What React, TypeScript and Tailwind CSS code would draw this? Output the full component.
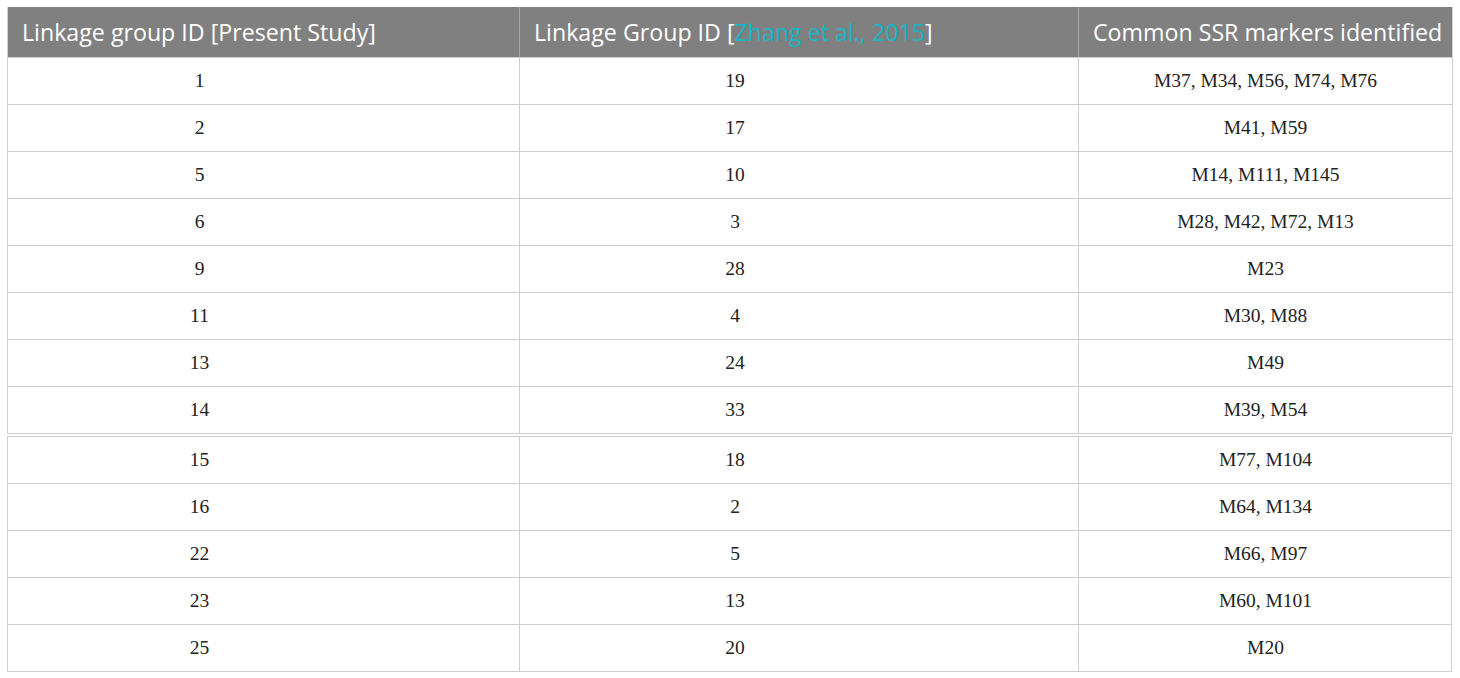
import React from "react";

const rowsA = [
  ["1", "19", "M37, M34, M56, M74, M76"],
  ["2", "17", "M41, M59"],
  ["5", "10", "M14, M111, M145"],
  ["6", "3", "M28, M42, M72, M13"],
  ["9", "28", "M23"],
  ["11", "4", "M30, M88"],
  ["13", "24", "M49"],
  ["14", "33", "M39, M54"],
];
const rowsB = [
  ["15", "18", "M77, M104"],
  ["16", "2", "M64, M134"],
  ["22", "5", "M66, M97"],
  ["23", "13", "M60, M101"],
  ["25", "20", "M20"],
];

const serif = { fontFamily: '"Liberation Serif", "Times New Roman", serif' };
const sans = { fontFamily: '"Open Sans", "Noto Sans", sans-serif' };

function Row({ r }: { r: string[] }) {
  return (
    <div className="grid grid-cols-[511px_559px_374px] h-[47px] text-[19.5px] text-[#222]" style={serif}>
      <div className="flex items-center justify-center border-t border-[#cfcfcf] pr-[128px]">{r[0]}</div>
      <div className="flex items-center justify-center border-t border-l border-[#cfcfcf] pr-[128px]">{r[1]}</div>
      <div className="flex items-center justify-center border-t border-l border-[#cfcfcf]">{r[2]}</div>
    </div>
  );
}

export default function App() {
  return (
    <div className="bg-white w-[1460px] h-[678px] pt-[7px] pl-[7px]">
      <div className="w-[1446px] border border-[#cfcfcf] border-t-0">
        <div
          className="grid grid-cols-[511px_559px_374px] h-[50px] bg-[#808080] text-white text-[23.2px]"
          style={sans}
        >
          <div className="flex items-center pl-[14px]">Linkage group ID [Present Study]</div>
          <div className="flex items-center pl-[14px] border-l border-[#a8a8a8]">
            Linkage Group ID [<span className="text-[#16b5c6]">Zhang et al., 2015</span>]
          </div>
          <div className="flex items-center pl-[14px] border-l border-[#a8a8a8]">Common SSR markers identified</div>
        </div>
        {rowsA.map((r, i) => (
          <Row key={i} r={r} />
        ))}
      </div>
      <div className="w-[1445px] mt-[2px] border border-[#cfcfcf] border-t-0">
        {rowsB.map((r, i) => (
          <Row key={i} r={r} />
        ))}
      </div>
    </div>
  );
}
